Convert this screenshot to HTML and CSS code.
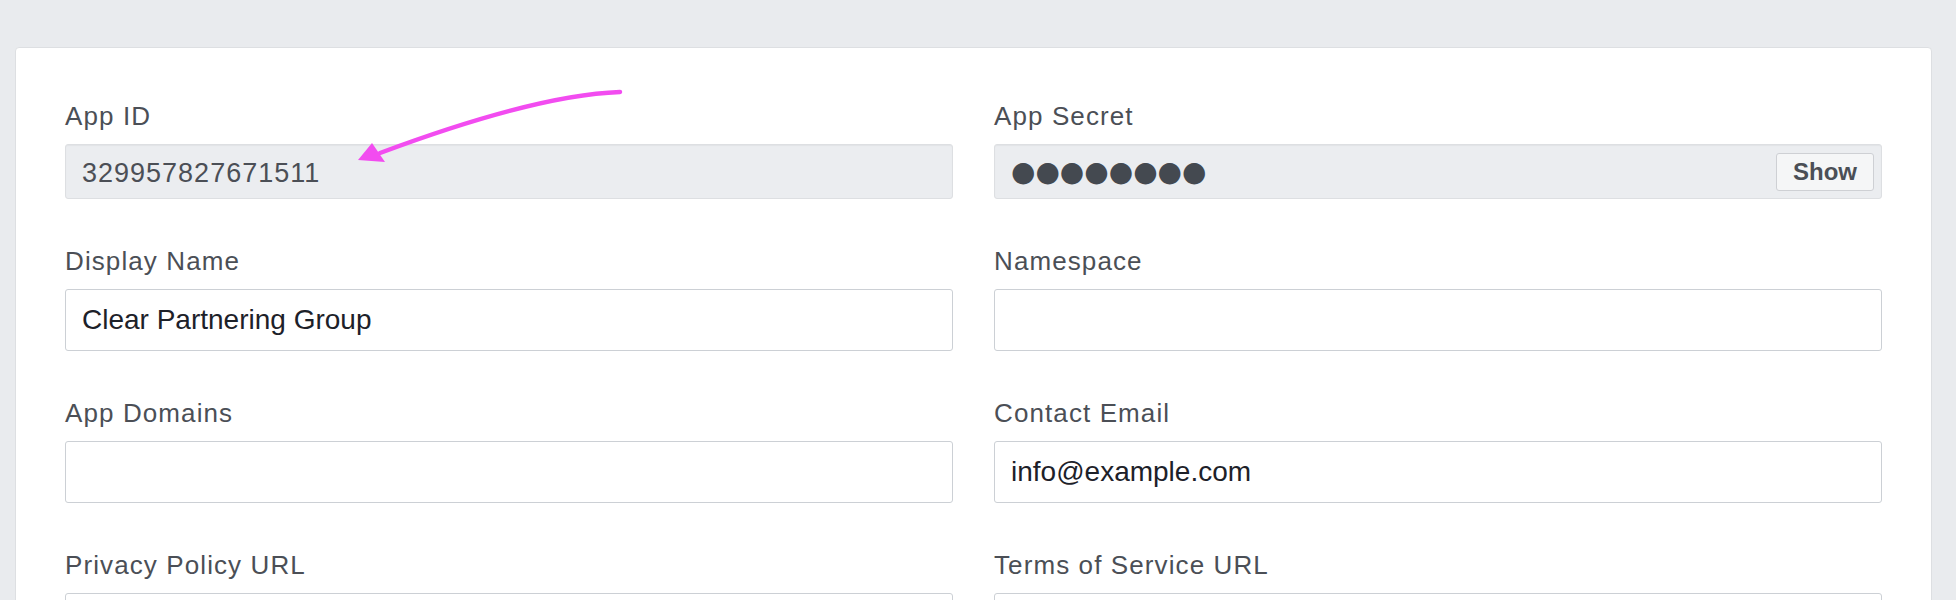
FILE: index.html
```html
<!DOCTYPE html>
<html lang="en">
  <head>
    <meta charset="UTF-8" />
    <meta name="viewport" content="width=device-width, initial-scale=1.0" />
    <title>App Settings</title>
    <link rel="stylesheet" href="styles.css">
  </head>
  <body>
    <div class="panel">
      <form class="form_grid">
        <div class="field">
          <label for="app_id">App ID</label>
          <input id="app_id" class="input input_readonly" readonly value="329957827671511" />
        </div>
        <div class="field">
          <label>App Secret</label>
          <div class="input input_readonly secret">
            <span class="secret_mask">●●●●●●●●</span>
            <button type="button" class="show_btn">Show</button>
          </div>
        </div>
        <div class="field">
          <label for="display_name">Display Name</label>
          <input id="display_name" class="input" value="Clear Partnering Group" />
        </div>
        <div class="field">
          <label for="namespace">Namespace</label>
          <input id="namespace" class="input" />
        </div>
        <div class="field">
          <label for="app_domains">App Domains</label>
          <input id="app_domains" class="input" />
        </div>
        <div class="field">
          <label for="contact_email">Contact Email</label>
          <input id="contact_email" class="input" value="info@example.com" />
        </div>
        <div class="field">
          <label for="privacy_url">Privacy Policy URL</label>
          <input id="privacy_url" class="input" />
        </div>
        <div class="field">
          <label for="terms_url">Terms of Service URL</label>
          <input id="terms_url" class="input" />
        </div>
      </form>
    </div>

    <!-- annotation arrow pointing at the app id -->
    <svg class="annotation" width="1956" height="600" viewBox="0 0 1956 600">
      <path d="M620,92 C560,94 474,118 380,153" fill="none" stroke="#f24cf0" stroke-width="4.5" stroke-linecap="round" />
      <polygon points="358,160 372,143 385,162" fill="#f24cf0" />
    </svg>
  </body>
</html>
```

FILE: styles.css
```css
html,
body {
  margin: 0;
  height: 600px;
  overflow: hidden;
}
body {
  position: relative;
  background-color: #e9ebee;
  font-family: "Liberation Sans", Arial, sans-serif;
}

.panel {
  margin: 47px 24px 0 15px;
  padding: 53px 49px 60px 49px;
  background-color: #fff;
  border: 1px solid #dddfe2;
  border-radius: 4px;
}

.form_grid {
  display: grid;
  grid-template-columns: 1fr 1fr;
  column-gap: 41px;
  row-gap: 47px;
  margin: 0;
}

.field {
  display: flex;
  flex-direction: column;
}
.field label {
  font-size: 26px;
  line-height: 30px;
  letter-spacing: 1.1px;
  color: #4b4f56;
  margin-bottom: 13px;
}

.input {
  box-sizing: border-box;
  height: 62px;
  padding: 0 16px;
  border: 1px solid #ccd0d5;
  border-radius: 3px;
  background-color: #fff;
  font-family: "Liberation Sans", Arial, sans-serif;
  font-size: 28px;
  color: #1d2129;
  outline: none;
}
.input_readonly {
  height: 55px;
  padding-top: 3px;
  background-color: #ebedf0;
  border-color: #dddfe2;
  box-shadow: inset 0 1px 1px rgba(0, 0, 0, 0.04);
  font-size: 27px;
  letter-spacing: 1px;
  color: #4b4f56;
}

.secret {
  display: flex;
  align-items: center;
  justify-content: space-between;
  padding: 0 7px 0 16px;
  letter-spacing: 0;
}
.secret_mask {
  font-family: "DejaVu Sans", sans-serif;
  font-size: 28px;
  line-height: 1;
  color: #444950;
}
.show_btn {
  box-sizing: border-box;
  height: 38px;
  padding: 0 16px;
  border: 1px solid #ced0d4;
  border-radius: 3px;
  background-color: #f5f6f7;
  font-family: "Liberation Sans", Arial, sans-serif;
  font-size: 24px;
  font-weight: 700;
  color: #4b4f56;
}

.annotation {
  position: absolute;
  left: 0;
  top: 0;
  pointer-events: none;
}
```
